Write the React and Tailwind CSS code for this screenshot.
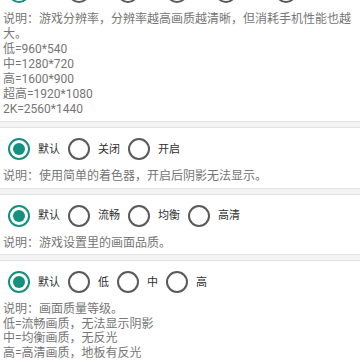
import React, { useState } from 'react';

const sections = [
  {
    options: ['默认', '低', '中', '高', '超高', '2K'],
    lines: [
      '说明：游戏分辨率，分辨率越高画质越清晰，但消耗手机性能也越大。',
      '低=960*540',
      '中=1280*720',
      '高=1600*900',
      '超高=1920*1080',
      '2K=2560*1440',
    ],
  },
  {
    options: ['默认', '关闭', '开启'],
    lines: ['说明：使用简单的着色器，开启后阴影无法显示。'],
  },
  {
    options: ['默认', '流畅', '均衡', '高清'],
    lines: ['说明：游戏设置里的画面品质。'],
  },
  {
    options: ['默认', '低', '中', '高'],
    lines: [
      '说明：画面质量等级。',
      '低=流畅画质，无法显示阴影',
      '中=均衡画质，无反光',
      '高=高清画质，地板有反光',
    ],
  },
];

const Radio = ({ checked, label, onClick }) => (
  <button type="button" onClick={onClick} className="flex items-center mr-[8px]">
    <span
      className={
        checked
          ? 'flex items-center justify-center w-[22px] h-[22px] rounded-full border-2 border-[#15907f]'
          : 'flex items-center justify-center w-[22px] h-[22px] rounded-full border-2 border-[#5a5a5a]'
      }
    >
      {checked && <span className="w-[12px] h-[12px] rounded-full bg-[#15907f]" />}
    </span>
    <span className="ml-[8px] text-[11px] text-[#2e2e2e] leading-none">{label}</span>
  </button>
);

const Card = ({ options, lines, first }) => {
  const [selected, setSelected] = useState(0);

  return (
    <div className={first ? 'bg-white pt-[6px] pb-[4px] border-b border-[#e2e2e2]' : 'bg-white pt-[6px] pb-[4px] border-y border-[#e2e2e2]'}>
      <div className="flex items-center h-[30px] pl-[8px]">
        {options.map((opt, i) => (
          <Radio key={opt} label={opt} checked={selected === i} onClick={() => setSelected(i)} />
        ))}
      </div>
      {/* first block has wider line spacing in the screenshot */}
      <div className={first ? 'mt-[5px] px-[3px] text-[12px] leading-[15px] text-[#767676]' : 'mt-[5px] px-[3px] text-[12px] leading-[14.5px] text-[#767676]'}>
        {lines.map((line) => (
          <p key={line}>{line}</p>
        ))}
      </div>
    </div>
  );
};

const App = () => {
  return (
    <div
      className="w-[360px] h-[360px] overflow-hidden bg-[#f3f3f3]"
      style={{ fontFamily: 'Roboto, "Noto Sans CJK SC", sans-serif' }}
    >
      <div className="flex flex-col gap-[5px] -mt-[29px]">
        {sections.map((s, i) => (
          <Card key={i} options={s.options} lines={s.lines} first={i === 0} />
        ))}
      </div>
    </div>
  );
};

export default App;
